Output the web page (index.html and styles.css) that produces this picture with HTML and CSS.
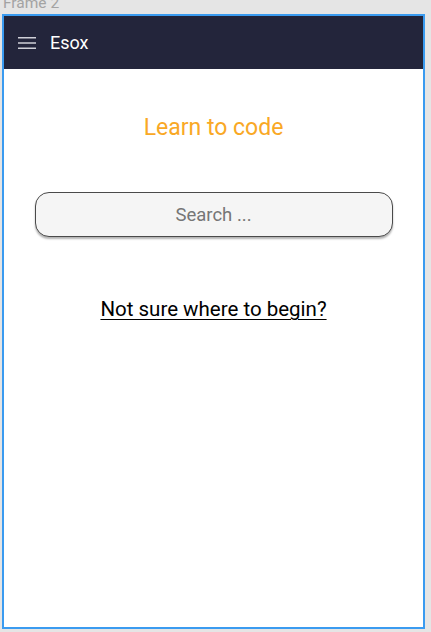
FILE: index.html
```html
<!DOCTYPE html>
<html>
<head>
<meta charset="utf-8">
<link rel="stylesheet" href="styles.css">
</head>
<body>
<div class="label">Frame 2</div>
<div class="frame">
  <header class="appbar">
    <svg class="menu" width="18" height="14" viewBox="0 0 18 14">
      <rect x="0" y="1" width="18" height="1.5" fill="#cfd0d8"/>
      <rect x="0" y="6.25" width="18" height="1.5" fill="#cfd0d8"/>
      <rect x="0" y="11.5" width="18" height="1.5" fill="#cfd0d8"/>
    </svg>
    <span class="title">Esox</span>
  </header>
  <main class="content">
    <h1 class="heading">Learn to code</h1>
    <div class="search">Search ...</div>
    <a class="begin" href="#">Not sure where to begin?</a>
  </main>
</div>
</body>
</html>
```
FILE: styles.css
```css
html, body {
  margin: 0;
  padding: 0;
}
body {
  background: #e5e5e5;
  font-family: Roboto, "Noto Sans", sans-serif;
  width: 431px;
  height: 632px;
  overflow: hidden;
}
.label {
  font-size: 15.5px;
  color: #a3a3a3;
  line-height: 14px;
  height: 14px;
  margin: -4px 0 4px 3px;
}
.frame {
  margin-left: 2px;
  width: 419px;
  height: 611px;
  border: 2px solid #3a9bf0;
  background: #ffffff;
  display: flex;
  flex-direction: column;
}
.appbar {
  height: 53px;
  background: #23253b;
  display: flex;
  align-items: center;
  padding-left: 14px;
  flex-shrink: 0;
}
.menu {
  display: block;
  margin-right: 14px;
  margin-top: 1px;
}
.title {
  color: #ffffff;
  font-size: 18px;
}
.content {
  display: flex;
  flex-direction: column;
  align-items: center;
}
.heading {
  margin: 45px 0 0 0;
  font-weight: 400;
  font-size: 23px;
  line-height: 27px;
  color: #f9a825;
}
.search {
  margin-top: 51px;
  width: 356px;
  height: 43px;
  box-sizing: content-box;
  border: 1px solid #4a4a4a;
  border-radius: 14px;
  background: #f5f5f5;
  box-shadow: 0 2px 2px rgba(0, 0, 0, 0.3);
  display: flex;
  align-items: center;
  justify-content: center;
  color: #767676;
  font-size: 18.5px;
}
.begin {
  margin-top: 60px;
  color: #000000;
  font-size: 20.5px;
  line-height: 24px;
  text-decoration: underline;
  text-underline-offset: 3px;
  text-decoration-thickness: 1px;
}
```
